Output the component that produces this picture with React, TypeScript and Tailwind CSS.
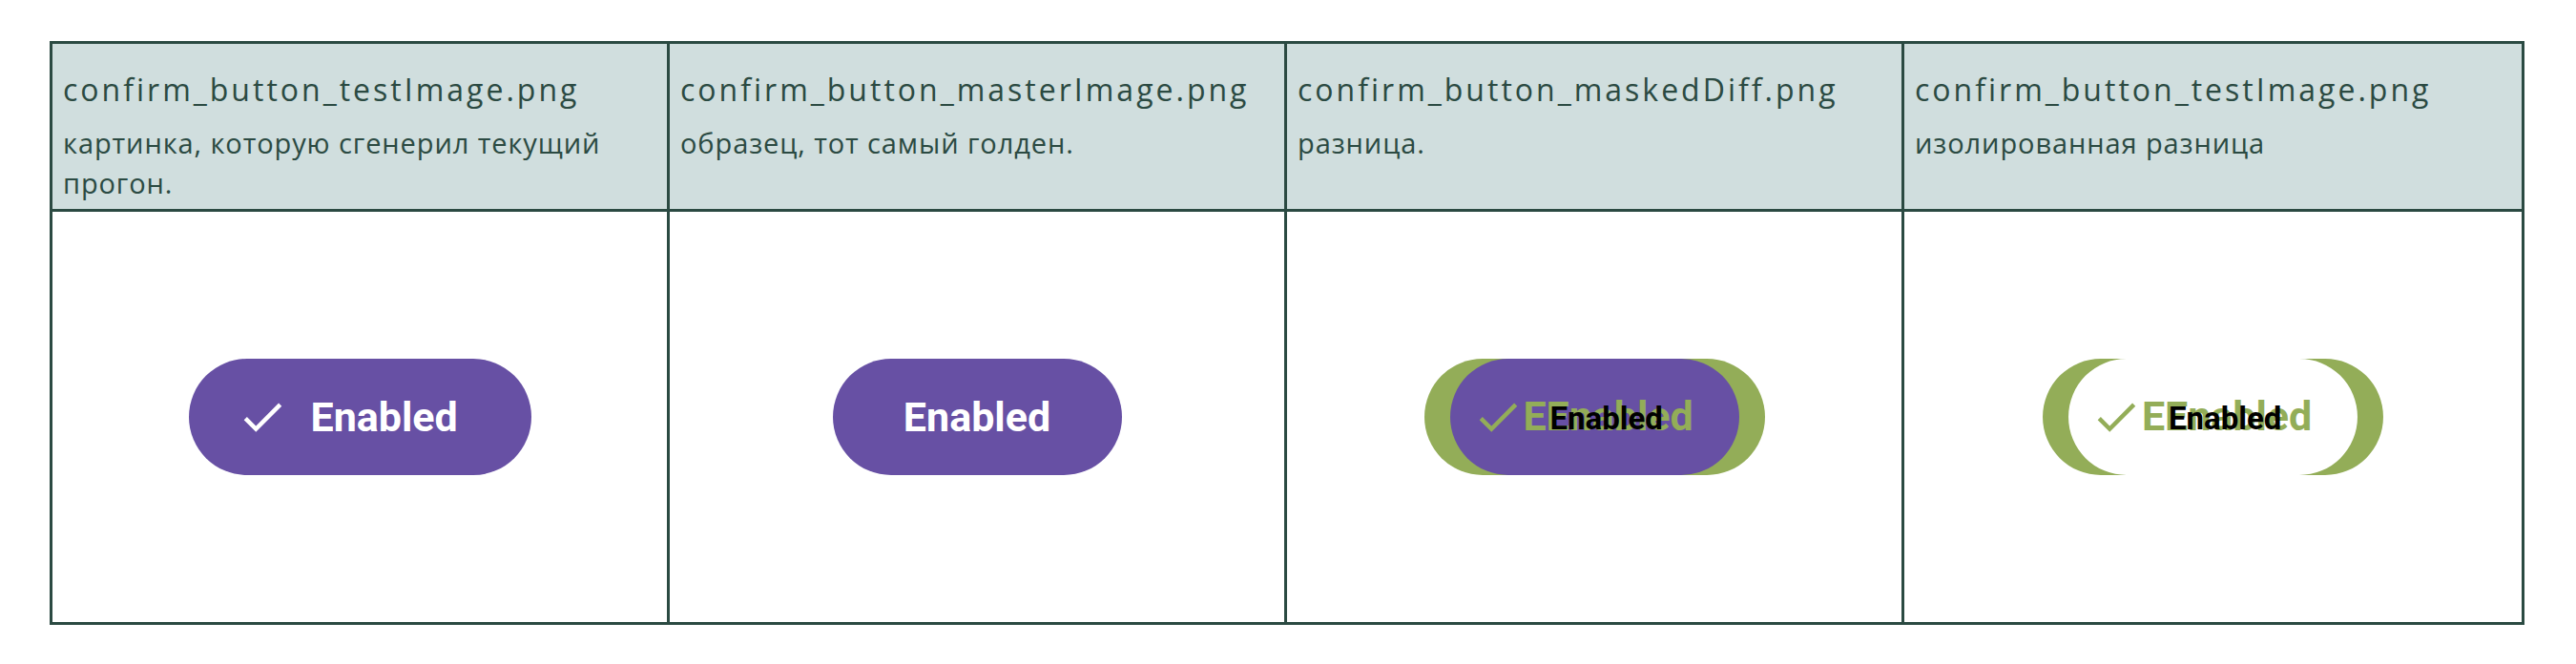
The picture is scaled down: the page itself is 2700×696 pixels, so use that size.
import React from "react";

const GREEN = "#93ad58";

type Col = { file: string; note: string; kind: "test" | "master" | "masked" | "isolated" };

const cols: Col[] = [
  { file: "confirm_button_testImage.png", note: "картинка, которую сгенерил текущий прогон.", kind: "test" },
  { file: "confirm_button_masterImage.png", note: "образец, тот самый голден.", kind: "master" },
  { file: "confirm_button_maskedDiff.png", note: "разница.", kind: "masked" },
  { file: "confirm_button_testImage.png", note: "изолированная разница", kind: "isolated" },
];

const CheckIcon = ({ color }: { color: string }) => (
  <svg width="54" height="54" viewBox="0 0 24 24" fill={color}>
    <path d="M9 16.17 4.83 12l-1.42 1.41L9 19 21 7l-1.41-1.41z" />
  </svg>
);

// кнопка из прогона: с галочкой
const TestButton = () => (
  <div className="flex h-[122px] w-[359px] items-center rounded-full bg-[#6750a4] pl-[50px]">
    <CheckIcon color="#ffffff" />
    <span className="ml-[24px] font-['Roboto'] text-[43px] font-bold text-white">Enabled</span>
  </div>
);

// голден: без галочки
const MasterButton = () => (
  <div className="flex h-[122px] w-[303px] items-center justify-center rounded-full bg-[#6750a4]">
    <span className="font-['Roboto'] text-[43px] font-bold text-white">Enabled</span>
  </div>
);

const DiffButton = ({ masked }: { masked: boolean }) => (
  <div className="relative h-[122px] w-[357px]">
    <svg width="357" height="122" viewBox="0 0 357 122" className="absolute inset-0">
      {masked ? (
        <>
          <rect x="0" y="0" width="357" height="122" rx="61" fill={GREEN} />
          <rect x="27" y="0" width="303" height="122" rx="61" fill="#6750a4" />
        </>
      ) : (
        <path
          fillRule="evenodd"
          fill={GREEN}
          d="M61 0H296A61 61 0 0 1 296 122H61A61 61 0 0 1 61 0Z M88 0H269A61 61 0 0 1 269 122H88A61 61 0 0 1 88 0Z"
        />
      )}
    </svg>
    <div className="absolute left-[50px] top-[34px]">
      <CheckIcon color={GREEN} />
    </div>
    <span className="absolute left-[104px] top-[32px] font-['Roboto'] text-[43px] font-bold leading-[56px] text-[#93ad58]">
      E
    </span>
    <span className="absolute left-[128px] top-[32px] font-['Roboto'] text-[43px] font-bold leading-[56px] text-[#93ad58]">
      Enabled
    </span>
    <span className="absolute left-[132px] top-[38px] font-['Roboto'] text-[33px] font-bold leading-[50px] text-black">
      Enabled
    </span>
  </div>
);

const App = () => {
  return (
    <div className="min-h-[696px] w-full bg-white pl-[52px] pt-[43px]">
      <div className="grid w-[2594px] grid-cols-4 border-[3px] border-[#2b4a42] font-['Open_Sans',sans-serif] text-[#2b4a42]">
        {cols.map((c, i) => (
          <div
            key={"h" + i}
            className={
              "border-b-[3px] border-[#2b4a42] bg-[#d0dede] px-[11px] pb-[6px] pt-[24px] " +
              (i < 3 ? "border-r-[3px]" : "")
            }
          >
            <div className="text-[32px] leading-[48px] tracking-[3px]">{c.file}</div>
            <div className="mt-[11px] text-[29px] leading-[42px] tracking-[0.9px]">{c.note}</div>
          </div>
        ))}

        {cols.map((c, i) => (
          <div
            key={"b" + i}
            className={
              "flex h-[430px] items-center justify-center border-[#2b4a42] " + (i < 3 ? "border-r-[3px]" : "")
            }
          >
            {c.kind === "test" && <TestButton />}
            {c.kind === "master" && <MasterButton />}
            {c.kind === "masked" && <DiffButton masked />}
            {c.kind === "isolated" && <DiffButton masked={false} />}
          </div>
        ))}
      </div>
    </div>
  );
};

export default App;
